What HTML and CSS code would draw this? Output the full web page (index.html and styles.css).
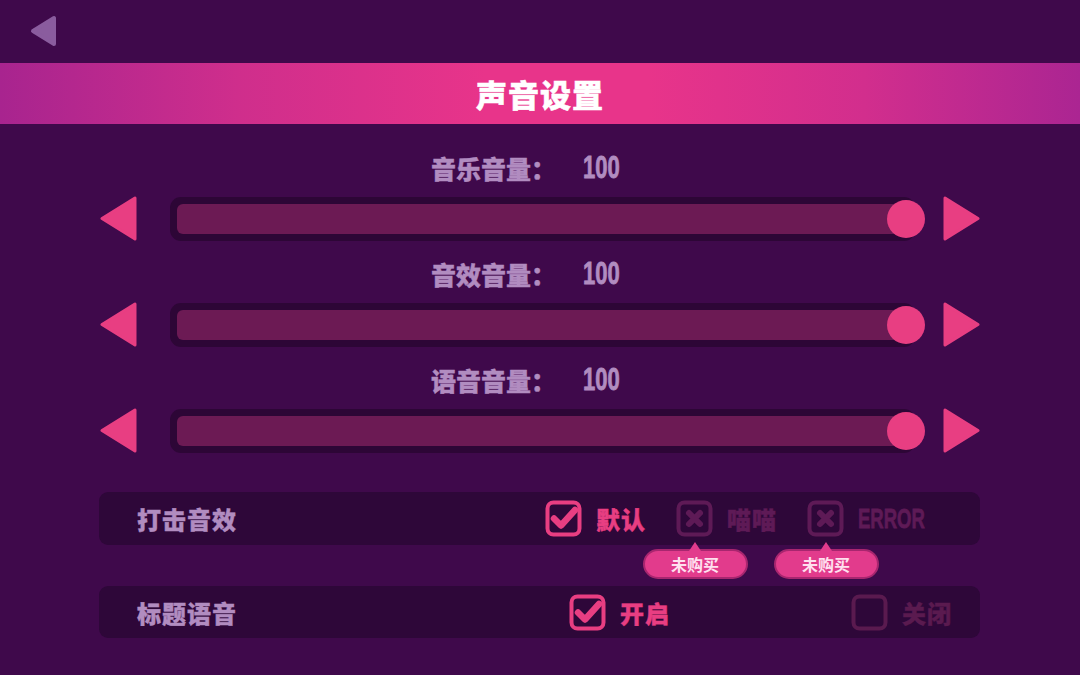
FILE: index.html
```html
<!DOCTYPE html>
<html lang="zh-CN">
<head>
<meta charset="UTF-8" />
<meta name="viewport" content="width=device-width, initial-scale=1" />
<title>声音设置</title>
<link rel="stylesheet" href="styles.css">
</head>
<body>

<header class="topbar">
  <button class="back" type="button" aria-label="返回">
    <svg width="27" height="32" viewBox="0 0 27 32"><polygon points="24,3 24,29 3,16" fill="#8a5c9e" stroke="#8a5c9e" stroke-width="4" stroke-linejoin="round"/></svg>
  </button>
</header>

<div class="banner"><h1>声音设置</h1></div>

<section class="volumes">
  <div class="volume">
    <div class="volume-label"><span class="name">音乐音量：</span><span class="num">100</span></div>
    <div class="volume-row">
      <svg class="step step-left" width="37" height="45" viewBox="0 0 37 45"><polygon points="35,2 35,43 2,22.5" fill="#e83e82" stroke="#e83e82" stroke-width="3" stroke-linejoin="round"/></svg>
      <div class="track"><div class="fill" style="width:100%"></div><span class="knob"></span></div>
      <svg class="step step-right" width="37" height="45" viewBox="0 0 37 45"><polygon points="2,2 2,43 35,22.5" fill="#e83e82" stroke="#e83e82" stroke-width="3" stroke-linejoin="round"/></svg>
    </div>
  </div>

  <div class="volume">
    <div class="volume-label"><span class="name">音效音量：</span><span class="num">100</span></div>
    <div class="volume-row">
      <svg class="step step-left" width="37" height="45" viewBox="0 0 37 45"><polygon points="35,2 35,43 2,22.5" fill="#e83e82" stroke="#e83e82" stroke-width="3" stroke-linejoin="round"/></svg>
      <div class="track"><div class="fill" style="width:100%"></div><span class="knob"></span></div>
      <svg class="step step-right" width="37" height="45" viewBox="0 0 37 45"><polygon points="2,2 2,43 35,22.5" fill="#e83e82" stroke="#e83e82" stroke-width="3" stroke-linejoin="round"/></svg>
    </div>
  </div>

  <div class="volume">
    <div class="volume-label"><span class="name">语音音量：</span><span class="num">100</span></div>
    <div class="volume-row">
      <svg class="step step-left" width="37" height="45" viewBox="0 0 37 45"><polygon points="35,2 35,43 2,22.5" fill="#e83e82" stroke="#e83e82" stroke-width="3" stroke-linejoin="round"/></svg>
      <div class="track"><div class="fill" style="width:100%"></div><span class="knob"></span></div>
      <svg class="step step-right" width="37" height="45" viewBox="0 0 37 45"><polygon points="2,2 2,43 35,22.5" fill="#e83e82" stroke="#e83e82" stroke-width="3" stroke-linejoin="round"/></svg>
    </div>
  </div>
</section>

<section class="options">
  <div class="option-row row-hit">
    <span class="row-title">打击音效</span>
    <label class="choice on">
      <span class="box">
        <svg width="37" height="37" viewBox="0 0 37 37"><rect x="2.5" y="2.5" width="32" height="32" rx="6" fill="none" stroke="currentColor" stroke-width="4"/><path d="M9 18.5 L16 25.5 L30 10" fill="none" stroke="currentColor" stroke-width="6.5" stroke-linecap="round" stroke-linejoin="round"/></svg>
      </span>
      <span class="choice-text">默认</span>
    </label>
    <label class="choice locked">
      <span class="box">
        <svg width="37" height="37" viewBox="0 0 37 37"><rect x="2.5" y="2.5" width="32" height="32" rx="6" fill="none" stroke="currentColor" stroke-width="4"/><path d="M13 13 L24 24 M24 13 L13 24" fill="none" stroke="currentColor" stroke-width="6" stroke-linecap="round"/></svg>
        <span class="tip">未购买</span>
      </span>
      <span class="choice-text">喵喵</span>
    </label>
    <label class="choice locked">
      <span class="box">
        <svg width="37" height="37" viewBox="0 0 37 37"><rect x="2.5" y="2.5" width="32" height="32" rx="6" fill="none" stroke="currentColor" stroke-width="4"/><path d="M13 13 L24 24 M24 13 L13 24" fill="none" stroke="currentColor" stroke-width="6" stroke-linecap="round"/></svg>
        <span class="tip">未购买</span>
      </span>
      <span class="choice-text latin">ERROR</span>
    </label>
  </div>

  <div class="option-row row-title-voice">
    <span class="row-title">标题语音</span>
    <label class="choice on">
      <span class="box">
        <svg width="37" height="37" viewBox="0 0 37 37"><rect x="2.5" y="2.5" width="32" height="32" rx="6" fill="none" stroke="currentColor" stroke-width="4"/><path d="M9 18.5 L16 25.5 L30 10" fill="none" stroke="currentColor" stroke-width="6.5" stroke-linecap="round" stroke-linejoin="round"/></svg>
      </span>
      <span class="choice-text">开启</span>
    </label>
    <label class="choice off far">
      <span class="box">
        <svg width="37" height="37" viewBox="0 0 37 37"><rect x="2.5" y="2.5" width="32" height="32" rx="6" fill="none" stroke="currentColor" stroke-width="4"/></svg>
      </span>
      <span class="choice-text">关闭</span>
    </label>
  </div>
</section>

</body>
</html>
```

FILE: styles.css
```css
body {
  margin: 0;
  padding: 0;
  background: #3f094b;
  font-family: "Noto Sans CJK SC", "Noto Sans", sans-serif;
  color: #b18cc0;
  width: 1080px;
  height: 675px;
  overflow: hidden;
}
.topbar {
  height: 63px;
  padding-left: 30px;
  display: flex;
  align-items: flex-start;
}
.back {
  margin-top: 15px;
  padding: 0;
  border: none;
  background: none;
  cursor: pointer;
}
.back svg {
  display: block;
}
.banner {
  height: 61px;
  display: flex;
  align-items: center;
  justify-content: center;
  background: linear-gradient(90deg, #a8248f 0%, #cf2e8c 22%, #e8348a 45%, #e8348a 60%, #d22e8d 80%, #ab2592 100%);
}
.banner h1 {
  margin: 0;
  color: #fff;
  font-size: 31px;
  font-weight: 900;
  letter-spacing: 1px;
  -webkit-text-stroke: 0.5px #fff;
}

/* condensed digits and latin words, squeezed from Liberation Sans Bold */
.num,
.choice-text.latin {
  display: inline-block;
  font-family: "Liberation Sans", Arial, sans-serif;
  font-weight: 700;
  transform-origin: left center;
  -webkit-text-stroke: 0.8px currentColor;
}

/* volume sliders */
.volumes {
  margin-top: 29px;
}
.volume {
  margin-bottom: 18px;
}
.volume-label {
  height: 30px;
  display: flex;
  align-items: center;
  padding-left: 431px;
  font-weight: 900;
}
.volume-label .name {
  font-size: 25px;
  width: 152px;
  -webkit-text-stroke: 0.4px currentColor;
}
.volume-label .num {
  font-size: 31px;
  transform: scaleX(0.71);
}
.volume-row {
  margin-top: 13px;
  height: 45px;
  display: flex;
  align-items: center;
  padding-left: 100px;
}
.step {
  display: block;
  flex: 0 0 auto;
}
.step-left {
  margin-right: 33px;
}
.step-right {
  margin-left: 28px;
}
.track {
  position: relative;
  width: 745px;
  height: 44px;
  padding: 7px;
  box-sizing: border-box;
  background: #2d0636;
  border-radius: 11px;
}
.fill {
  height: 100%;
  background: #6c1a54;
  border-radius: 6px;
}
.knob {
  position: absolute;
  right: -10px;
  top: 50%;
  width: 38px;
  height: 38px;
  margin-top: -19px;
  border-radius: 50%;
  background: #e83e82;
}

/* toggle rows */
.options {
  margin-top: 39px;
  padding: 0 100px 0 99px;
}
.option-row {
  display: flex;
  align-items: center;
  height: 53px;
  padding-left: 38px;
  background: #2e0739;
  border-radius: 9px;
}
.option-row + .option-row {
  margin-top: 41px;
  height: 52px;
}
.row-title {
  font-size: 24px;
  font-weight: 900;
  color: #b18cc0;
  letter-spacing: 1px;
  -webkit-text-stroke: 0.4px currentColor;
}
.row-hit .row-title {
  width: 408px;
}
.row-title-voice .row-title {
  width: 432px;
}
.choice {
  display: flex;
  align-items: center;
  gap: 14px;
  cursor: pointer;
}
.choice + .choice {
  margin-left: 30px;
}
.choice.far {
  margin-left: 181px;
}
.box {
  position: relative;
  width: 37px;
  height: 37px;
}
.box svg {
  display: block;
}
.choice-text {
  font-size: 24px;
  font-weight: 900;
  letter-spacing: 1px;
  -webkit-text-stroke: 0.4px currentColor;
}
.choice-text.latin {
  font-size: 28px;
  letter-spacing: 0;
  transform: scaleX(0.66);
}
.choice.on {
  color: #e83e82;
}
.choice.locked {
  color: #5e1a56;
}
.choice.off {
  color: #5a1a4f;
}
.tip {
  position: absolute;
  top: 49px;
  left: 50%;
  width: 105px;
  height: 30px;
  margin-left: -52px;
  box-sizing: border-box;
  border: 2px solid #a8266f;
  border-radius: 15px;
  background: #e23b8c;
  color: #ffe0ef;
  font-size: 16px;
  font-weight: 700;
  line-height: 26px;
  text-align: center;
}
.tip::before {
  content: "";
  position: absolute;
  left: 50%;
  top: -9px;
  margin-left: -6px;
  border-left: 6px solid transparent;
  border-right: 6px solid transparent;
  border-bottom: 9px solid #e23b8c;
}
```
